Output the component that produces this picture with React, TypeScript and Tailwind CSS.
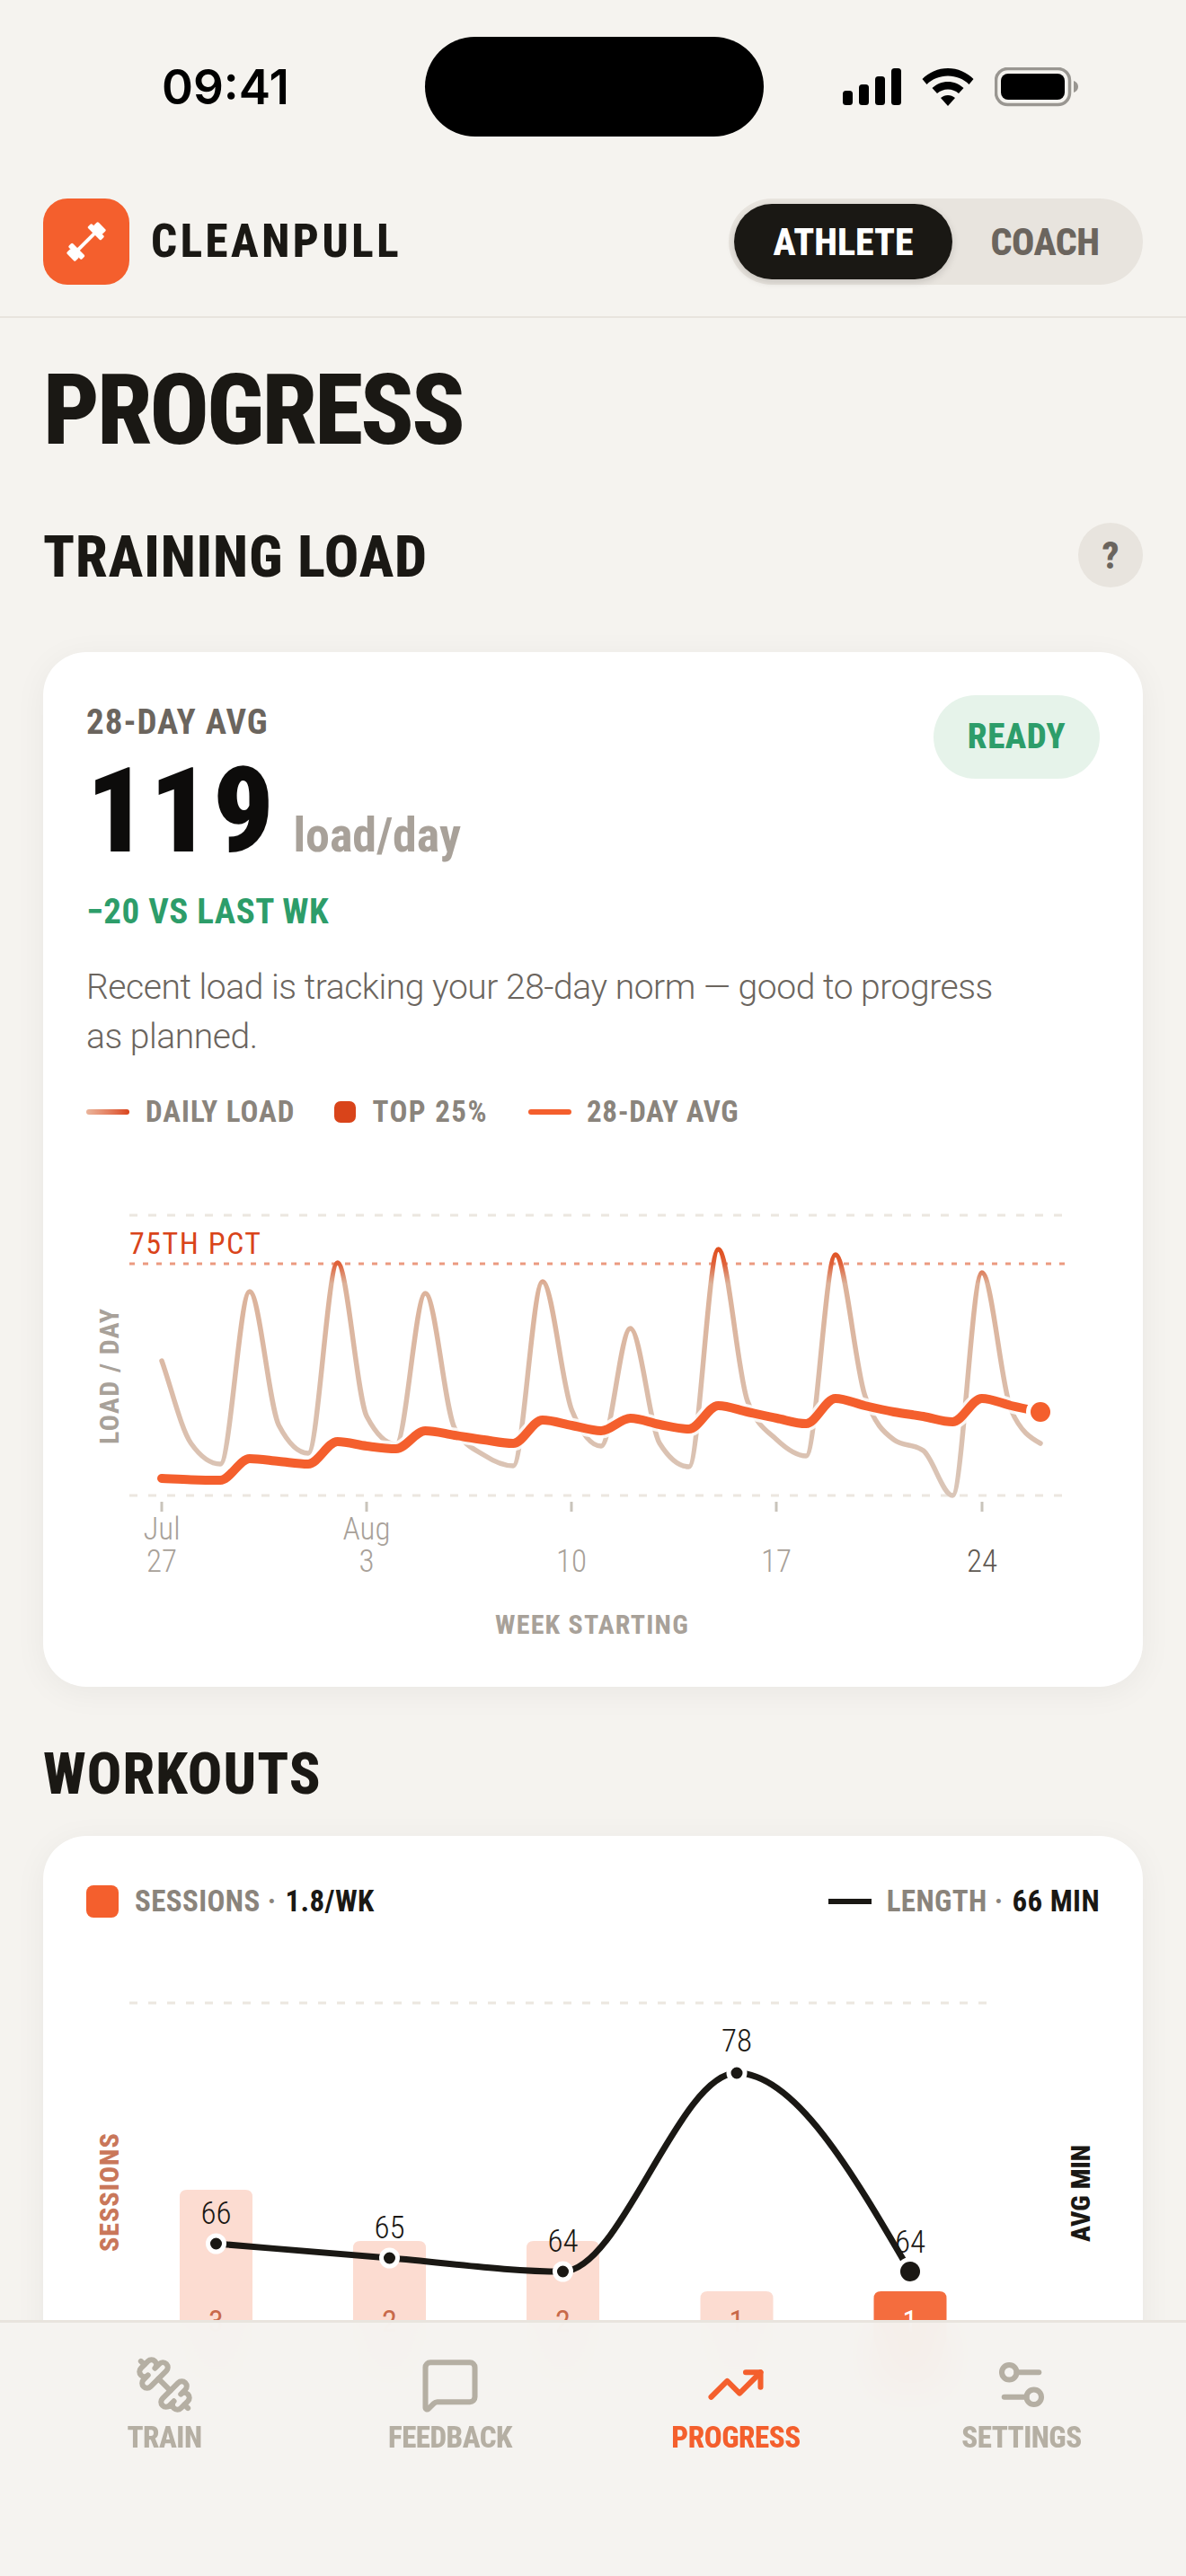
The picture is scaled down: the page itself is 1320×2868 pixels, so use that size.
import { Dumbbell, MessageSquare, TrendingUp, Settings2 } from "lucide-react";

function monotone(p: number[][]): string {
  const n = p.length;
  const s: number[] = [];
  const m: number[] = [];
  for (let i = 0; i < n - 1; i++) s.push((p[i + 1][1] - p[i][1]) / (p[i + 1][0] - p[i][0]));
  m.push(s[0]);
  for (let i = 1; i < n - 1; i++) {
    const h0 = p[i][0] - p[i - 1][0];
    const h1 = p[i + 1][0] - p[i][0];
    const t = (s[i - 1] * h1 + s[i] * h0) / (h0 + h1);
    m.push((Math.sign(s[i - 1]) + Math.sign(s[i])) * Math.min(Math.abs(s[i - 1]), Math.abs(s[i]), 0.5 * Math.abs(t)) || 0);
  }
  m.push((3 * s[n - 2] - m[n - 2]) / 2);
  let d = `M${p[0][0]} ${p[0][1]}`;
  for (let i = 0; i < n - 1; i++) {
    const h = (p[i + 1][0] - p[i][0]) / 3;
    d += `C${p[i][0] + h} ${p[i][1] + h * m[i]} ${p[i + 1][0] - h} ${p[i + 1][1] - h * m[i + 1]} ${p[i + 1][0]} ${p[i + 1][1]}`;
  }
  return d;
}

const dayX = (i: number) => 180 + (i * 978) / 30;
const daily = [1515, 1607, 1630, 1438, 1587, 1618, 1406, 1577, 1608, 1440, 1590, 1620, 1632, 1427, 1570, 1610, 1479, 1607, 1633, 1391, 1560, 1603, 1621, 1397, 1553, 1603, 1615, 1665, 1417, 1570, 1607];
const avg = [1646, 1647.5, 1648, 1624, 1627, 1630, 1605, 1610, 1613, 1593, 1598, 1603, 1607, 1581, 1587, 1593, 1579, 1586, 1591, 1565, 1572, 1579, 1585, 1557, 1565, 1572, 1577, 1583, 1557, 1565, 1572];
const dailyPath = monotone(daily.map((y, i) => [dayX(i), y]));
const avgPath = monotone(avg.map((y, i) => [dayX(i), y]));

const ticks = [
  { x: 180, top: "Jul", bottom: "27" },
  { x: 408, top: "Aug", bottom: "3" },
  { x: 636, top: "", bottom: "10" },
  { x: 864, top: "", bottom: "17" },
  { x: 1093, top: "", bottom: "24" },
];

const bars = [
  { x: 240.5, top: 2437, n: "3", ly: 2497, lab: "66", ty: 2475 },
  { x: 433.5, top: 2494, n: "2", ly: 2513, lab: "65", ty: 2491 },
  { x: 626.5, top: 2494, n: "2", ly: 2528, lab: "64", ty: 2506 },
  { x: 820, top: 2550, n: "1", ly: 2307, lab: "78", ty: 2283 },
  { x: 1013, top: 2550, n: "1", ly: 2528, lab: "64", ty: 2507 },
];
const lengthPath = monotone(bars.map((b) => [b.x, b.ly]));

const navItems = [
  { label: "TRAIN", Icon: Dumbbell, active: false, flip: true },
  { label: "FEEDBACK", Icon: MessageSquare, active: false, flip: false },
  { label: "PROGRESS", Icon: TrendingUp, active: true, flip: false },
  { label: "SETTINGS", Icon: Settings2, active: false, flip: false },
];

function StatusIcons() {
  return (
    <div className="flex items-center gap-[23px]">
      <svg width="65" height="42" viewBox="0 0 65 42" fill="#000">
        <rect x="0" y="25" width="11" height="16" rx="3.5" />
        <rect x="18" y="18" width="11" height="23" rx="3.5" />
        <rect x="36" y="9" width="11" height="32" rx="3.5" />
        <rect x="54" y="0" width="11" height="41" rx="3.5" />
      </svg>
      <svg width="58" height="42" viewBox="0 0 58 42" fill="#000">
        <path d="M29 0C40 0 50 4.500 57.500 12L52.500 18C46.500 12 38 8.500 29 8.500C20 8.500 11.500 12 5.500 18L0.500 12C8 4.500 18 0 29 0Z" />
        <path d="M29 15C35.500 15 41.500 17.500 46.500 22L41 28C37.500 25 33.500 23.500 29 23.500C24.500 23.500 20.500 25 17 28L11.500 22C16.500 17.500 22.500 15 29 15Z" />
        <path d="M29 30C32 30 34.500 31 37 33L29 42L21 33C23.500 31 26 30 29 30Z" />
      </svg>
      <svg width="94" height="44" viewBox="0 0 94 44">
        <rect x="1.500" y="1.500" width="82" height="40" rx="13" fill="none" stroke="#999691" strokeWidth="3.500" />
        <rect x="7" y="7" width="71" height="29" rx="8" fill="#000" />
        <path d="M88 15C91 16 93 18.500 93 21.500C93 24.500 91 27 88 28Z" fill="#999691" />
      </svg>
    </div>
  );
}

export default function App() {
  return (
    <div className="relative w-[1320px] h-[2868px] overflow-hidden bg-[#f5f3ef] text-[#1a1814] font-['Roboto_Condensed','Roboto',sans-serif] [font-stretch:75%]">
      {/* status bar */}
      <div className="flex items-center justify-between pt-[41px] pl-[180px] pr-[119px]">
        <div className="w-[142px] text-[53px] leading-[60px] font-semibold text-black font-['Inter',sans-serif] [font-stretch:100%]">09:41</div>
        <div className="w-[377px] h-[111px] rounded-[56px] bg-black ml-[150px] mr-[88px]" />
        <StatusIcons />
      </div>

      {/* header */}
      <div className="flex items-center justify-between pt-[69px] pb-[35px] px-[48px] border-b-2 border-[#e8e4de]">
        <div className="flex items-center gap-[24px]">
          <div className="w-[96px] h-[96px] rounded-[27px] bg-[#f45f2d] flex items-center justify-center">
            <svg width="48" height="48" viewBox="-30 -30 60 60" fill="#fff">
              <g transform="rotate(-45)">
                <rect x="-18" y="-2.500" width="36" height="5" />
                <rect x="-23" y="-13" width="8" height="26" rx="2" />
                <rect x="15" y="-13" width="8" height="26" rx="2" />
                <rect x="-31" y="-8.500" width="9" height="17" rx="2" />
                <rect x="22" y="-8.500" width="9" height="17" rx="2" />
              </g>
            </svg>
          </div>
          <div className="text-[51px] leading-[60px] font-extrabold tracking-[3.500px] text-[#1a1814]">CLEANPULL</div>
        </div>
        <div className="flex items-center h-[96px] rounded-[48px] bg-[#e8e4de] p-[6px]">
          <div className="w-[243px] h-[84px] rounded-[42px] bg-[#1a1814] text-white flex items-center justify-center text-[42px] font-extrabold tracking-[0px] shadow-[0_3px_9px_rgba(0,0,0,0.15)]">ATHLETE</div>
          <div className="w-[206px] h-[84px] rounded-[42px] text-[#6b655e] flex items-center justify-center text-[42px] font-extrabold tracking-[-0.500px]">COACH</div>
        </div>
      </div>

      <div className="px-[48px]">
        <h1 className="mt-[48px] text-[110px] leading-[110px] font-extrabold tracking-[-3px]">PROGRESS</h1>

        <div className="mt-[70px] flex items-center justify-between h-[72px]">
          <h2 className="text-[64px] leading-[72px] font-extrabold tracking-[0.900px] pt-[6px]">TRAINING LOAD</h2>
          <div className="w-[72px] h-[72px] rounded-full bg-[#e8e4de] flex items-center justify-center text-[42px] font-extrabold text-[#6b655e]">?</div>
        </div>

        {/* training load card */}
        <div className="mt-[72px] h-[1152px] rounded-[48px] bg-white shadow-[0_6px_36px_rgba(26,24,20,0.05)] px-[48px] pt-[54px]">
          <div className="flex justify-between items-start">
            <div>
              <div className="text-[39px] leading-[48px] font-bold tracking-[1px] text-[#6b655e]">28-DAY AVG</div>
              <div className="flex items-baseline gap-[19px] mt-[9px]">
                <span className="text-[132px] leading-[132px] font-black tracking-[3px] text-[#0d0c0b]">119</span>
                <span className="text-[54px] leading-[60px] font-bold text-[#a8a199]">load/day</span>
              </div>
              <div className="mt-[22px] text-[39px] leading-[48px] font-bold tracking-[0.500px] text-[#2d9d6a]">−20 VS LAST WK</div>
            </div>
            <div className="w-[185px] h-[93px] -mt-[6px] rounded-[47px] bg-[#e6f3ea] text-[#2d9d6a] flex items-center justify-center text-[39px] font-extrabold tracking-[0.500px]">READY</div>
          </div>
          <p className="mt-[33px] w-[1030px] text-[39px] leading-[55px] font-light text-[#6b655e] tracking-[-0.450px] font-['Roboto',sans-serif] [font-stretch:100%]">Recent load is tracking your 28-day norm — good to progress as planned.</p>
          <div className="mt-[38px] flex items-center h-[36px] text-[33px] font-bold tracking-[1px] text-[#8a847c]">
            <span className="w-[48px] h-[6px] rounded-[3px] bg-gradient-to-r from-[#e9b59c] to-[#d9441a]" />
            <span className="ml-[18px]">DAILY LOAD</span>
            <span className="ml-[44px] w-[24px] h-[24px] rounded-[7px] bg-[#d9441a]" />
            <span className="ml-[18px] tracking-[1.500px]">TOP 25%</span>
            <span className="ml-[45px] w-[48px] h-[6px] rounded-[3px] bg-[#f45f2d]" />
            <span className="ml-[17px] tracking-[0.600px]">28-DAY AVG</span>
          </div>

          <svg className="mt-[84px] block" width="1128" height="500" viewBox="96 1340 1128 500">
            <defs>
              <linearGradient id="dailyGrad" gradientUnits="userSpaceOnUse" x1="0" y1="1391" x2="0" y2="1665">
                <stop offset="0" stopColor="#e0501f" />
                <stop offset="0.06" stopColor="#e0623a" />
                <stop offset="0.14" stopColor="#dcb29a" />
                <stop offset="1" stopColor="#dac6b8" />
              </linearGradient>
            </defs>
            <line x1="144" x2="1183" y1="1353" y2="1353" stroke="#ece7e0" strokeWidth="3" strokeDasharray="9 12" />
            <line x1="144" x2="1183" y1="1665" y2="1665" stroke="#ece7e0" strokeWidth="3" strokeDasharray="9 12" />
            <line x1="144" x2="1186" y1="1407" y2="1407" stroke="#eb9a80" strokeWidth="3" strokeDasharray="6 9" />
            <text x="144" y="1396" fontSize="34" fontWeight="400" fill="#d9441a" letterSpacing="1.500">75TH PCT</text>
            <text transform="translate(132 1608) rotate(-90)" fontSize="30" fontWeight="700" fill="#a8a199" letterSpacing="1.400">LOAD / DAY</text>
            <path d={dailyPath} fill="none" stroke="url(#dailyGrad)" strokeWidth="5.500" strokeLinecap="round" />
            <path d={avgPath} fill="none" stroke="#fff" strokeWidth="17" strokeLinecap="round" opacity="0.85" />
            <path d={avgPath} fill="none" stroke="#f45f2d" strokeWidth="10" strokeLinecap="round" />
            <circle cx="1158" cy="1572" r="16" fill="#fff" />
            <circle cx="1158" cy="1572" r="11" fill="#f45f2d" />
            {ticks.map((t, i) => (
              <g key={t.bottom}>
                <line x1={t.x} x2={t.x} y1="1672" y2="1683" stroke="#c9c4bb" strokeWidth="3" />
                {t.top && <text x={t.x} y="1714" fontSize="35" fontWeight="300" textAnchor="middle" fill="#a8a199">{t.top}</text>}
                <text x={t.x} y="1750" fontSize="35" fontWeight="300" textAnchor="middle" fill={i === 4 ? "#5f5952" : "#a8a199"}>{t.bottom}</text>
              </g>
            ))}
            <text x="659" y="1819" fontSize="30" fontWeight="700" textAnchor="middle" fill="#a8a199" letterSpacing="1.200">WEEK STARTING</text>
          </svg>
        </div>

        <h2 className="mt-[62px] text-[64px] leading-[72px] font-extrabold tracking-[1px]">WORKOUTS</h2>

        {/* workouts card */}
        <div className="mt-[32px] h-[1000px] rounded-[48px] bg-white shadow-[0_6px_36px_rgba(26,24,20,0.05)] px-[48px] pt-[55px]">
          <div className="flex items-center justify-between h-[36px] text-[33px] font-bold tracking-[0.400px] text-[#8a847c]">
            <div className="flex items-center">
              <span className="w-[36px] h-[36px] rounded-[8px] bg-[#f45f2d]" />
              <span className="ml-[18px]">SESSIONS ·</span>
              <span className="ml-[10px] text-[#1a1814]">1.8/WK</span>
            </div>
            <div className="flex items-center">
              <span className="w-[48px] h-[6px] bg-[#1a1814]" />
              <span className="ml-[17px]">LENGTH ·</span>
              <span className="ml-[10px] text-[#1a1814]">66 MIN</span>
            </div>
          </div>
          <svg className="mt-[26px] block" width="1128" height="500" viewBox="96 2160 1128 500">
            <line x1="144" x2="1100" y1="2229" y2="2229" stroke="#ece7e0" strokeWidth="3" strokeDasharray="9 12" />
            <text transform="translate(132 2506) rotate(-90)" fontSize="30" fontWeight="800" fill="#c9775a" letterSpacing="1">SESSIONS</text>
            <text transform="translate(1213 2495) rotate(-90)" fontSize="30" fontWeight="800" fill="#1a1814">AVG MIN</text>
            {bars.map((b, i) => (
              <g key={i}>
                <path d={`M${b.x - 40.5} 2660V${b.top + 8}q0 -8 8 -8H${b.x + 32.5}q8 0 8 8V2660Z`} fill={i === 4 ? "#f46d3e" : "#fcdcd1"} />
                <text x={b.x} y="2595" fontSize="34" textAnchor="middle" fill={i === 4 ? "#fff" : "#c8694a"}>{b.n}</text>
              </g>
            ))}
            <path d={lengthPath} fill="none" stroke="#1a1814" strokeWidth="7" strokeLinecap="round" />
            {bars.map((b, i) => (
              <g key={i}>
                <text x={b.x} y={b.ty} fontSize="35" fontWeight="300" textAnchor="middle" fill="#1a1814">{b.lab}</text>
                {i < 4 ? (
                  <circle cx={b.x} cy={b.ly} r="9" fill="#1a1814" stroke="#fff" strokeWidth="5" />
                ) : (
                  <>
                    <circle cx={b.x} cy={b.ly} r="16" fill="#fff" />
                    <circle cx={b.x} cy={b.ly} r="11" fill="#1a1814" />
                  </>
                )}
              </g>
            ))}
          </svg>
        </div>
      </div>

      {/* bottom nav */}
      <div className="absolute left-0 right-0 bottom-0 h-[285px] border-t-[3px] border-[#e8e4de] bg-[#f5f3ef]/[0.97] backdrop-blur-xl px-[24px] pt-[36px] grid grid-cols-4">
        {navItems.map(({ label, Icon, active, flip }) => (
          <div key={label} className="flex flex-col items-center">
            <Icon size={66} strokeWidth={2.2} color={active ? "#f45f2d" : "#b5afa3"} className={flip ? "-scale-x-100" : ""} />
            <span className={`mt-[4px] text-[33px] leading-[44px] font-extrabold tracking-[-0.500px] ${active ? "text-[#f45f2d]" : "text-[#b5afa3]"}`}>{label}</span>
          </div>
        ))}
      </div>
    </div>
  );
}
